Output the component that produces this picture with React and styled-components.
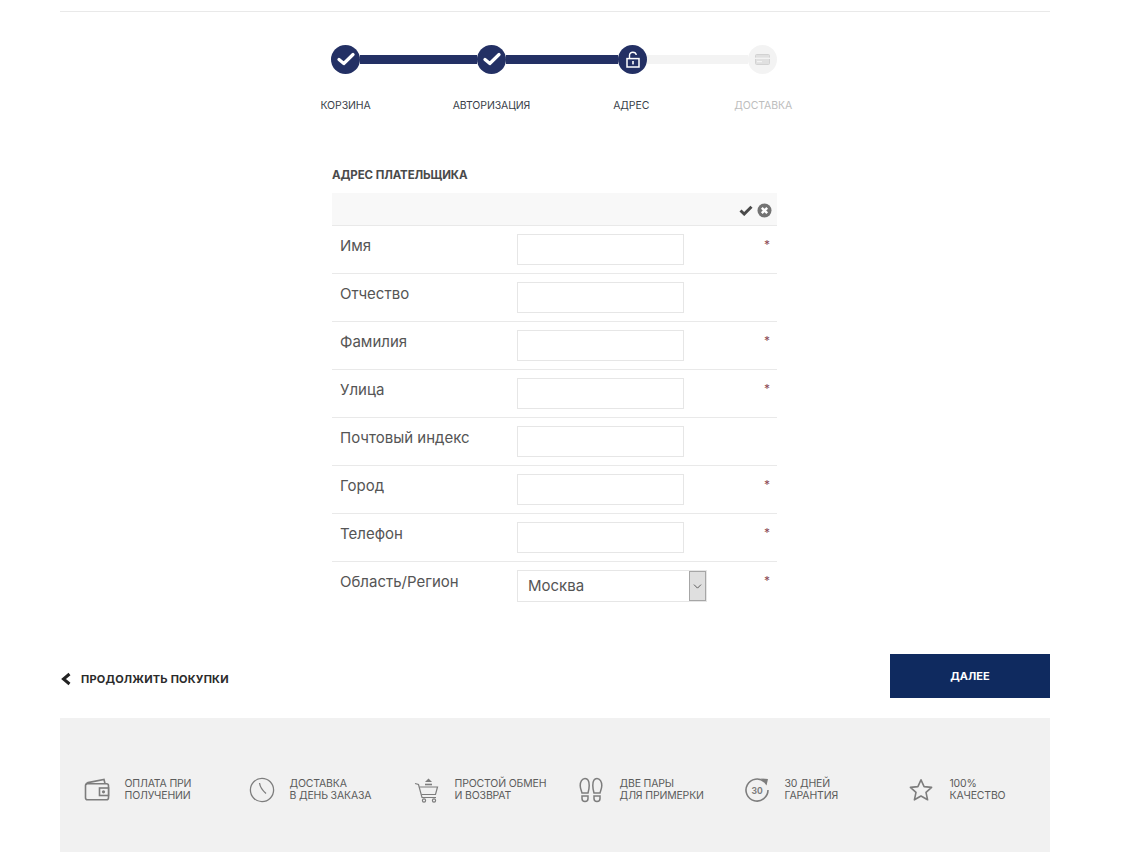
import React from "react";
import styled, { createGlobalStyle } from "styled-components";
import { ChevronDown } from "lucide-react";

const fields = [
  { label: "Имя", required: true },
  { label: "Отчество" },
  { label: "Фамилия", required: true },
  { label: "Улица", required: true },
  { label: "Почтовый индекс" },
  { label: "Город", required: true },
  { label: "Телефон", required: true },
];

const CheckMark = () => (
  <svg width="18" height="14" viewBox="0 0 18 14">
    <path d="M2 7.5 L6.8 11.5 L16 2.5" fill="none" stroke="#fff" strokeWidth="3.2" strokeLinecap="round" strokeLinejoin="round" />
  </svg>
);

const LockIcon = () => (
  <svg width="14" height="17" viewBox="0 0 14 17">
    <path d="M3.5 7 V4.4 C3.5 2.4 5 1.2 6.8 1.2 C8.6 1.2 10 2.3 10.3 4" fill="none" stroke="#fff" strokeWidth="1.4" />
    <rect x="1" y="7.6" width="12" height="8.4" fill="none" stroke="#fff" strokeWidth="1.5" />
    <rect x="6.2" y="10" width="1.6" height="3.4" fill="#fff" />
  </svg>
);

const CardIcon = () => (
  <svg width="15" height="11" viewBox="0 0 15 11">
    <rect x="0.5" y="0.5" width="14" height="10" rx="1" fill="#e0e0e0" stroke="#d2d2d2" />
    <rect y="3.6" width="15" height="1.4" fill="#f3f3f3" />
    <rect x="2" y="7" width="5" height="1.2" fill="#f3f3f3" />
  </svg>
);

const BackChevron = () => (
  <svg width="12" height="14" viewBox="0 0 12 14">
    <path d="M9.5 2 L3.5 7 L9.5 12" fill="none" stroke="#222" strokeWidth="3" />
  </svg>
);

const WalletIcon = () => (
  <svg width="26" height="24" viewBox="0 0 26 24" fill="none" stroke="#7d7d7d" strokeWidth="1.6">
    <path d="M2 7 C2 5.5 3 5 4 4.6 L20 1.5 L21 5.5" />
    <rect x="1.5" y="5.8" width="23" height="16" rx="2" />
    <rect x="15.5" y="10" width="9" height="7.5" fill="#f1f1f1" />
    <circle cx="19.5" cy="13.8" r="1.6" fill="#7d7d7d" stroke="none" />
  </svg>
);

const ClockIcon = () => (
  <svg width="26" height="26" viewBox="0 0 26 26" fill="none" stroke="#7d7d7d" strokeWidth="1.3">
    <circle cx="13" cy="13" r="11.6" />
    <path d="M10.5 6 C11 9.5 12.5 12.5 17 16.5" />
  </svg>
);

const CartIcon = () => (
  <svg width="26" height="26" viewBox="0 0 26 26" fill="none" stroke="#7d7d7d" strokeWidth="1.2">
    <path d="M1 6.5 L4.5 7.5 L8 20.5 H22" />
    <path d="M5.5 10 H23.5 L21.5 17.5 H7.5" />
    <circle cx="10" cy="23.5" r="1.6" />
    <circle cx="20" cy="23.5" r="1.6" />
    <path d="M11 7.5 H18" strokeWidth="1.6" />
    <path d="M14.5 1.5 L18 5 H11 Z" fill="#7d7d7d" stroke="none" />
  </svg>
);

const FeetIcon = () => (
  <svg width="24" height="26" viewBox="0 0 24 26" fill="none" stroke="#7d7d7d" strokeWidth="1.5">
    <path d="M6 1.5 C9 1.5 10.2 5 10.2 8.5 C10.2 11.5 9.5 14 9 16 H3 C2.5 14 1.2 11.5 1.2 8.5 C1.2 5 3 1.5 6 1.5 Z" />
    <path d="M3 19 H9 V21.5 C9 23.5 7.8 24.5 6 24.5 C4.2 24.5 3 23.5 3 21.5 Z" />
    <path d="M18 1.5 C21 1.5 22.8 5 22.8 8.5 C22.8 11.5 21.5 14 21 16 H15 C14.5 14 13.8 11.5 13.8 8.5 C13.8 5 15 1.5 18 1.5 Z" />
    <path d="M15 19 H21 V21.5 C21 23.5 19.8 24.5 18 24.5 C16.2 24.5 15 23.5 15 21.5 Z" />
  </svg>
);

const ReturnIcon = () => (
  <svg width="26" height="26" viewBox="0 0 26 26">
    <path d="M20.5 5 A11 11 0 1 0 24 13" fill="none" stroke="#7d7d7d" strokeWidth="1.6" />
    <path d="M17 1.5 L24 2 L22.5 8.5 Z" fill="#7d7d7d" />
    <text x="13" y="16.5" textAnchor="middle" fontFamily="Inter, sans-serif" fontSize="8.5" fontWeight="700" fill="#7d7d7d">30</text>
  </svg>
);

const StarIcon = () => (
  <svg width="24" height="24" viewBox="0 0 24 24" fill="none" stroke="#7d7d7d" strokeWidth="1.6" strokeLinejoin="round">
    <path d="M12 1.8 L15.1 8.6 L22.6 9.4 L17 14.4 L18.6 21.8 L12 18 L5.4 21.8 L7 14.4 L1.4 9.4 L8.9 8.6 Z" />
  </svg>
);

const benefits = [
  { icon: <WalletIcon />, lines: ["ОПЛАТА ПРИ", "ПОЛУЧЕНИИ"] },
  { icon: <ClockIcon />, lines: ["ДОСТАВКА", "В ДЕНЬ ЗАКАЗА"] },
  { icon: <CartIcon />, lines: ["ПРОСТОЙ ОБМЕН", "И ВОЗВРАТ"] },
  { icon: <FeetIcon />, lines: ["ДВЕ ПАРЫ", "ДЛЯ ПРИМЕРКИ"] },
  { icon: <ReturnIcon />, lines: ["30 ДНЕЙ", "ГАРАНТИЯ"] },
  { icon: <StarIcon />, lines: ["100%", "КАЧЕСТВО"] },
];

const App = () => {
  return (
    <Page>
      <GlobalStyle />
      <TopLine />
      <Stepper>
        <Circle>
          <CheckMark />
        </Circle>
        <Connector $width={117} />
        <Circle>
          <CheckMark />
        </Circle>
        <Connector $width={112} />
        <Circle>
          <LockIcon />
        </Circle>
        <Connector $width={101} $muted />
        <Circle $muted>
          <CardIcon />
        </Circle>
      </Stepper>
      <StepLabels>
        <StepLabel>КОРЗИНА</StepLabel>
        <StepLabel>АВТОРИЗАЦИЯ</StepLabel>
        <StepLabel $offset={1}>АДРЕС</StepLabel>
        <StepLabel $offset={3} $muted>ДОСТАВКА</StepLabel>
      </StepLabels>

      <FormBox>
        <FormTitle>АДРЕС ПЛАТЕЛЬЩИКА</FormTitle>
        <FormHead>
          <svg width="14" height="11" viewBox="0 0 14 11">
            <path d="M1.5 5.5 L5.2 9 L12.5 1.8" fill="none" stroke="#4a4a4a" strokeWidth="3" />
          </svg>
          <svg width="15" height="15" viewBox="0 0 15 15">
            <circle cx="7.5" cy="7.5" r="7" fill="#737373" />
            <path d="M4.8 4.8 L10.2 10.2 M10.2 4.8 L4.8 10.2" stroke="#fff" strokeWidth="2.4" />
          </svg>
        </FormHead>
        {fields.map((f) => (
          <FormRow key={f.label}>
            <FieldLabel>{f.label}</FieldLabel>
            <TextInput type="text" />
            {f.required && <Star>*</Star>}
          </FormRow>
        ))}
        <FormRow $last>
          <FieldLabel>Область/Регион</FieldLabel>
          <SelectBox>
            <SelectValue>Москва</SelectValue>
            <SelectArrow>
              <ChevronDown size={13} strokeWidth={1.4} color="#333" />
            </SelectArrow>
          </SelectBox>
          <Star>*</Star>
        </FormRow>
      </FormBox>

      <Actions>
        <BackLink href="#">
          <BackChevron />
          ПРОДОЛЖИТЬ ПОКУПКИ
        </BackLink>
        <NextButton>ДАЛЕЕ</NextButton>
      </Actions>

      <Benefits>
        {benefits.map((b) => (
          <Benefit key={b.lines[0]}>
            <BenefitIcon>{b.icon}</BenefitIcon>
            <BenefitText>
              {b.lines[0]}
              <br />
              {b.lines[1]}
            </BenefitText>
          </Benefit>
        ))}
      </Benefits>
    </Page>
  );
};

const GlobalStyle = createGlobalStyle`
  html, body {
    margin: 0;
    padding: 0;
    background: #fff;
    overflow: hidden;
  }
  * {
    box-sizing: border-box;
  }
`;

const Page = styled.div`
  width: 990px;
  margin-left: 60px;
  padding-top: 11px;
  font-family: Inter, "Liberation Sans", sans-serif;
`;

const TopLine = styled.div`
  height: 1px;
  background-color: #e9e9e9;
`;

const Stepper = styled.div`
  display: flex;
  align-items: center;
  height: 30px;
  margin-top: 32px;
  padding-left: 271px;
`;

const Circle = styled.div`
  width: 29px;
  height: 29px;
  flex-shrink: 0;
  border-radius: 50%;
  display: flex;
  align-items: center;
  justify-content: center;
  background-color: ${(p) => (p.$muted ? "#f3f3f3" : "#233064")};
`;

const Connector = styled.div`
  width: ${(p) => p.$width}px;
  height: 9px;
  background-color: ${(p) => (p.$muted ? "#f3f3f3" : "#233064")};
`;

const StepLabels = styled.div`
  display: flex;
  gap: 82px;
  margin-top: 25px;
  padding-left: 260.5px;
`;

const StepLabel = styled.div`
  margin-left: ${(p) => p.$offset || 0}px;
  font-size: 10.5px;
  line-height: 14px;
  letter-spacing: -0.1px;
  color: ${(p) => (p.$muted ? "#bdbdbd" : "#3a3f4a")};
`;

const FormBox = styled.div`
  width: 445px;
  margin: 55px 0 0 272px;
`;

const FormTitle = styled.div`
  font-size: 11.5px;
  line-height: 14px;
  font-weight: 700;
  letter-spacing: -0.1px;
  color: #4a4a4a;
`;

const FormHead = styled.div`
  height: 33px;
  margin-top: 11px;
  padding: 3px 5px 0 0;
  display: flex;
  align-items: center;
  justify-content: flex-end;
  gap: 4px;
  background-color: #f8f8f8;
  border-bottom: 1px solid #e9e9e9;
`;

const FormRow = styled.div`
  position: relative;
  height: 48px;
  padding: 8px 0 0 8px;
  display: flex;
  align-items: flex-start;
  border-bottom: ${(p) => (p.$last ? "none" : "1px solid #e9e9e9")};
`;

const FieldLabel = styled.div`
  width: 177px;
  flex-shrink: 0;
  font-size: 15px;
  line-height: 24px;
  color: #555;
`;

const TextInput = styled.input`
  width: 167px;
  height: 31px;
  padding: 0 8px;
  border: 1px solid #e6e6e6;
  background-color: #fff;
  outline: none;
`;

const SelectBox = styled.div`
  width: 190px;
  height: 32px;
  padding: 0 0 2px 10px;
  display: flex;
  align-items: center;
  justify-content: space-between;
  border: 1px solid #e6e6e6;
`;

const SelectValue = styled.span`
  font-size: 15px;
  color: #555;
`;

const SelectArrow = styled.div`
  width: 17px;
  height: 30px;
  margin-bottom: -2px;
  display: flex;
  align-items: center;
  justify-content: center;
  background-color: #dfdfdf;
  border: 1px solid #a6a6a6;
`;

const Star = styled.span`
  position: absolute;
  top: 11px;
  right: 7px;
  font-size: 12px;
  line-height: 16px;
  color: #8c4a55;
`;

const Actions = styled.div`
  height: 44px;
  margin-top: 44px;
  display: flex;
  align-items: center;
  justify-content: space-between;
`;

const BackLink = styled.a`
  display: flex;
  align-items: center;
  gap: 9px;
  margin-top: 5px;
  font-size: 11px;
  font-weight: 700;
  letter-spacing: 0.2px;
  color: #2b2b2b;
  text-decoration: none;
`;

const NextButton = styled.button`
  width: 160px;
  height: 44px;
  border: none;
  background-color: #0f2a5f;
  color: #fff;
  font-family: inherit;
  font-size: 11px;
  font-weight: 700;
  cursor: pointer;
`;

const Benefits = styled.div`
  height: 134px;
  margin-top: 20px;
  padding: 0 0 0 24px;
  display: flex;
  align-items: center;
  background-color: #f1f1f1;
`;

const Benefit = styled.div`
  width: 165px;
  flex-shrink: 0;
  margin-top: 10px;
  display: flex;
  align-items: center;
`;

const BenefitIcon = styled.div`
  width: 40.5px;
  display: flex;
  align-items: center;
`;

const BenefitText = styled.div`
  font-size: 10.5px;
  line-height: 12px;
  letter-spacing: -0.17px;
  color: #5c5c5c;
`;

export default App;
